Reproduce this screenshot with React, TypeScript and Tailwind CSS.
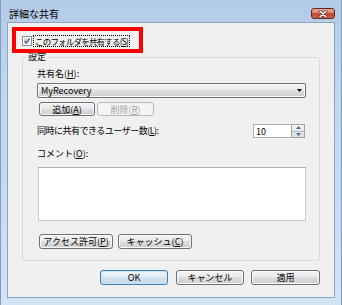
import React from "react";

const font = "[font-family:'Noto_Sans_CJK_JP','Noto_Sans',sans-serif]";

const btnBase =
  "flex items-center justify-center rounded-[3px] border text-[9px] leading-none";
const btnNormal =
  "border-[#707070] bg-[linear-gradient(#f2f2f2_0%,#ebebeb_49%,#dddddd_50%,#cfcfcf_100%)] shadow-[inset_0_0_0_1px_#fbfbfb] text-black";
const btnDisabled = "border-[#b5b9bc] bg-[#f4f4f4] text-[#a3a3a3]";
const btnDefault =
  "border-[#3c7fb1] bg-[linear-gradient(#eef5fa_0%,#e3edf5_49%,#d2e3f0_50%,#c4d9ea_100%)] shadow-[inset_0_0_0_1px_#cfe4f3] text-black";

function U({ children }: { children: React.ReactNode }) {
  return <span className="underline underline-offset-[1px]">{children}</span>;
}

function CheckBox() {
  return (
    <svg width="10" height="10" viewBox="0 0 10 10" className="shrink-0">
      <defs>
        <linearGradient id="cbg" x1="0" y1="0" x2="1" y2="1">
          <stop offset="0" stopColor="#cdd1d6" />
          <stop offset="1" stopColor="#f7f7f7" />
        </linearGradient>
      </defs>
      <rect x="0.5" y="0.5" width="9" height="9" fill="#fff" stroke="#8e8f8f" />
      <rect x="2" y="2" width="6" height="6" fill="url(#cbg)" />
      <path d="M2.6 5 L4.3 6.9 L7.6 2.6" fill="none" stroke="#4a5f99" strokeWidth="1.4" />
    </svg>
  );
}

export default function App() {
  return (
    <div
      className={`${font} relative w-[342px] h-[305px] overflow-hidden border-x border-[#7f9ec0] bg-[linear-gradient(180deg,#b2cbe7_0%,#c2d7ee_30%,#c9dcf1_70%,#d2e3f4_100%)] text-black`}
    >
      {/* title bar */}
      <div className="flex h-[22px] items-start justify-between pl-[8px] pr-[6px]">
        <div className="mt-[8px] text-[10px] leading-[12px]">詳細な共有</div>
        <div className="mt-[8px] flex h-[11px] w-[24px] items-center justify-center rounded-[3px] border border-[#6a2219] bg-[linear-gradient(#e7ab9e_0%,#d6806d_45%,#c2402d_52%,#cf6450_100%)]">
          <svg width="10" height="8" viewBox="0 0 10 8">
            <path d="M2 1 L8 7 M8 1 L2 7" stroke="#5a2a24" strokeWidth="3" strokeLinecap="round" />
            <path d="M2 1 L8 7 M8 1 L2 7" stroke="#ffffff" strokeWidth="1.6" strokeLinecap="round" />
          </svg>
        </div>
      </div>

      {/* client area */}
      <div className="relative mx-[6px] flex h-[276px] flex-col border border-[#8ca4be] bg-[#f0f0f0]">
        {/* checkbox row */}
        <div className="ml-[14px] mt-[12px] flex h-[12px] items-center gap-[1px]">
          <CheckBox />
          <div className="h-[12px] whitespace-nowrap border border-dotted border-black px-[1px] text-[8.5px] leading-[10px] tracking-[-0.8px]">
            このフォルダを共有する(<U>S</U>)
          </div>
        </div>

        {/* group box */}
        <fieldset className="mx-[14px] mt-[5px] rounded-[3px] border border-[#d5dbe0] pl-[14px] pr-[13px] pt-[6px] pb-[11px]">
          <legend className="-ml-[11px] px-[2px] text-[9px] leading-[10px]">設定</legend>

          <div className="h-[12px] text-[9px] leading-[12px]">
            共有名(<U>H</U>):
          </div>

          <div className="mt-[3px] flex h-[15px] items-center justify-between rounded-[2px] border border-[#707070] bg-[linear-gradient(#f2f2f2_0%,#ebebeb_49%,#dddddd_50%,#cfcfcf_100%)] pl-[3px] pr-[3px] shadow-[inset_0_0_0_1px_#fbfbfb]">
            <span className="text-[9px] leading-none">MyRecovery</span>
            <svg width="5" height="3" viewBox="0 0 5 3">
              <path d="M0 0 H5 L2.5 3 Z" fill="#000" />
            </svg>
          </div>

          <div className="ml-[2px] mt-[4px] flex h-[14px] gap-[2px]">
            <div className={`${btnBase} ${btnNormal} w-[56px]`}>
              追加(<U>A</U>)
            </div>
            <div className={`${btnBase} ${btnDisabled} w-[57px]`}>
              削除(<U>R</U>)
            </div>
          </div>

          <div className="mt-[8px] flex h-[14px] items-center justify-between">
            <span className="text-[9px] leading-[12px] tracking-[-0.5px]">
              同時に共有できるユーザー数(<U>L</U>):
            </span>
            <div className="mr-[1px] flex h-[14px]">
              <div className="flex w-[38px] items-center border border-[#abadb3] border-r-0 bg-white pl-[2px] text-[9px] leading-none">
                10
              </div>
              <div className="flex w-[14px] flex-col border border-[#a0a4aa] bg-[linear-gradient(#f4f4f4,#dcdcdc)]">
                <div className="flex flex-1 items-center justify-center border-b border-[#b8bcc2]">
                  <svg width="5" height="3" viewBox="0 0 5 3">
                    <path d="M0 3 H5 L2.5 0 Z" fill="#4f6a9c" />
                  </svg>
                </div>
                <div className="flex flex-1 items-center justify-center">
                  <svg width="5" height="3" viewBox="0 0 5 3">
                    <path d="M0 0 H5 L2.5 3 Z" fill="#4f6a9c" />
                  </svg>
                </div>
              </div>
            </div>
          </div>

          <div className="mt-[10px] h-[12px] text-[9px] leading-[12px]">
            コメント(<U>O</U>):
          </div>

          <div className="ml-[1px] mt-[7px] h-[54px] border border-[#c5c8cc] border-t-[#abadb3] bg-white" />

          <div className="ml-[2px] mt-[13px] flex h-[15px] gap-[5px]">
            <div className={`${btnBase} ${btnNormal} w-[74px]`}>
              アクセス許可(<U>P</U>)
            </div>
            <div className={`${btnBase} ${btnNormal} w-[74px]`}>
              キャッシュ(<U>C</U>)
            </div>
          </div>
        </fieldset>

        {/* dialog buttons */}
        <div className="mr-[14px] mt-[9px] flex h-[15px] justify-end">
          <div className={`${btnBase} ${btnDefault} w-[68px]`}>OK</div>
          <div className={`${btnBase} ${btnNormal} ml-[8px] w-[68px]`}>キャンセル</div>
          <div className={`${btnBase} ${btnNormal} ml-[7px] w-[69px]`}>適用</div>
        </div>

        {/* red annotation box */}
        <div className="pointer-events-none absolute left-[4px] top-[4px] h-[26px] w-[131px] border-4 border-[#ff0000]" />
      </div>
    </div>
  );
}
